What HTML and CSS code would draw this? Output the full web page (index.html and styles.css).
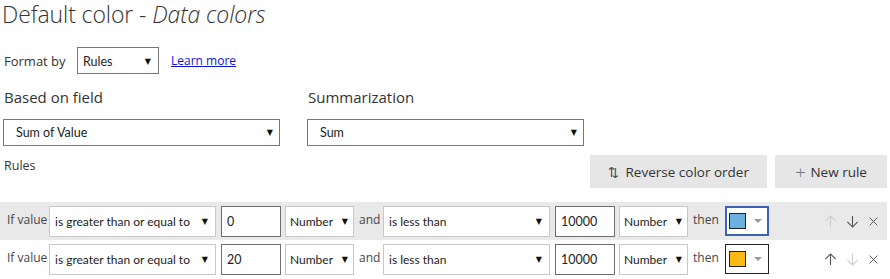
FILE: index.html
```html
<!DOCTYPE html>
<html lang="en">
<head>
  <meta charset="UTF-8">
  <title>Default color - Data colors</title>
  <link rel="stylesheet" href="styles.css">
</head>
<body>
  <h1 class="title">Default color - <em>Data colors</em></h1>

  <div class="format-row">
    <span class="format-label">Format by</span>
    <div class="select select-small"><span class="val">Rules</span><span class="caret">&#9660;</span></div>
    <a class="learn" href="#">Learn more</a>
  </div>

  <div class="fields">
    <div class="field">
      <div class="field-label">Based on field</div>
      <div class="select select-wide"><span class="val">Sum of Value</span><span class="caret">&#9660;</span></div>
    </div>
    <div class="field">
      <div class="field-label">Summarization</div>
      <div class="select select-wide"><span class="val">Sum</span><span class="caret">&#9660;</span></div>
    </div>
  </div>

  <div class="rules-head">
    <span class="rules-label">Rules</span>
    <div class="actions">
      <button class="btn btn-reverse"><span class="btn-icon">&#8645;</span> Reverse color order</button>
      <button class="btn btn-new"><span class="btn-plus">+</span> New rule</button>
    </div>
  </div>

  <div class="rule rule-active">
    <span class="word word-if">If value</span>
    <div class="ctl ctl-cond"><span class="val">is greater than or equal to</span><span class="caret">&#9660;</span></div>
    <div class="ctl-input">0</div>
    <div class="ctl ctl-type"><span class="val">Number</span><span class="caret">&#9660;</span></div>
    <span class="word word-and">and</span>
    <div class="ctl ctl-cond"><span class="val">is less than</span><span class="caret">&#9660;</span></div>
    <div class="ctl-input">10000</div>
    <div class="ctl ctl-type"><span class="val">Number</span><span class="caret">&#9660;</span></div>
    <span class="word word-then">then</span>
    <div class="picker picker-focus"><span class="swatch swatch-blue"></span><span class="picker-caret"></span></div>
    <div class="tools">
      <svg class="ico off" viewBox="0 0 14 14"><path d="M7 13V1M1.5 6.5L7 1l5.5 5.5"/></svg>
      <svg class="ico" viewBox="0 0 14 14"><path d="M7 1v12M1.5 7.5L7 13l5.5-5.5"/></svg>
      <svg class="ico ico-x" viewBox="0 0 14 14"><path d="M2 2l10 10M12 2L2 12"/></svg>
    </div>
  </div>

  <div class="rule">
    <span class="word word-if">If value</span>
    <div class="ctl ctl-cond"><span class="val">is greater than or equal to</span><span class="caret">&#9660;</span></div>
    <div class="ctl-input">20</div>
    <div class="ctl ctl-type"><span class="val">Number</span><span class="caret">&#9660;</span></div>
    <span class="word word-and">and</span>
    <div class="ctl ctl-cond"><span class="val">is less than</span><span class="caret">&#9660;</span></div>
    <div class="ctl-input">10000</div>
    <div class="ctl ctl-type"><span class="val">Number</span><span class="caret">&#9660;</span></div>
    <span class="word word-then">then</span>
    <div class="picker"><span class="swatch swatch-orange"></span><span class="picker-caret"></span></div>
    <div class="tools">
      <svg class="ico" viewBox="0 0 14 14"><path d="M7 13V1M1.5 6.5L7 1l5.5 5.5"/></svg>
      <svg class="ico off" viewBox="0 0 14 14"><path d="M7 1v12M1.5 7.5L7 13l5.5-5.5"/></svg>
      <svg class="ico ico-x" viewBox="0 0 14 14"><path d="M2 2l10 10M12 2L2 12"/></svg>
    </div>
  </div>
</body>
</html>
```

FILE: styles.css
```css
body { margin: 0; font-family: "Open Sans", "Noto Sans", sans-serif; color: #333; background: #fff; width: 890px; overflow: hidden; }

.title { margin: 0; padding: 0 0 0 2px; height: 30px; font-size: 23px; font-weight: 300; line-height: 28px; color: #333; letter-spacing: -0.1px; }
.title em { font-style: italic; }

.format-row { display: flex; align-items: center; height: 27px; margin-top: 17px; }
.format-label { font-size: 13px; margin-left: 4px; width: 73px; }
.learn { font-size: 12px; color: #1010e0; margin-left: 12px; }

.val { white-space: nowrap; overflow: hidden; }
.select { box-sizing: border-box; display: flex; align-items: center; justify-content: space-between; border: 1px solid #777; height: 27px; font-family: Lato, sans-serif; font-size: 12.5px; color: #222; background: #fff; }
.select-small { width: 82px; padding: 2px 7px 0 5px; }
.select-wide { width: 277px; padding: 0 6px 0 12px; }
.caret { font-family: "DejaVu Sans", sans-serif; font-size: 8px; color: #111; flex: none; margin-left: 4px; }

.fields { display: flex; gap: 27px; margin-top: 13px; padding-left: 3px; }
.field-label { font-size: 15px; height: 32px; padding-left: 1px; }

.rules-head { display: flex; justify-content: space-between; margin-top: 9px; height: 47px; }
.rules-label { font-size: 12.5px; margin-left: 4px; margin-top: 2px; }
.actions { display: flex; gap: 8px; margin-right: 3px; height: 33px; }
.btn { border: none; background: #e6e6e6; font-family: inherit; font-size: 13.5px; color: #333; height: 33px; padding: 0; }
.btn-reverse { width: 177px; }
.btn-new { width: 112px; }
.btn-icon { font-size: 13px; color: #444; margin-right: 3px; }
.btn-plus { font-size: 19px; font-weight: 300; color: #777; vertical-align: -2px; margin-right: 1px; }

.rule { display: flex; align-items: center; width: 887px; height: 38px; }
.rule-active { background: #e9e9e9; }

.word { font-size: 12px; color: #444; margin-top: -3px; }
.word-if { margin-left: 7px; width: 42px; }
.word-and { width: 24px; margin-left: 5px; }
.word-then { width: 32px; margin-left: 5px; }

.ctl { box-sizing: border-box; display: flex; align-items: center; justify-content: space-between; height: 31px; border: 1px solid #c8c8c8; background: #fff; font-family: Lato, sans-serif; font-size: 12px; color: #222; padding: 1px 7px 0 5px; }
.ctl-cond { width: 167px; margin-right: 5px; }
.ctl-type { width: 69px; padding-left: 4px; padding-right: 5px; }
.ctl-input { box-sizing: border-box; width: 60px; height: 31px; border: 1px solid #6e6e6e; background: #fff; font-family: Lato, sans-serif; font-size: 12.5px; color: #222; padding: 7px 0 0 5px; margin-right: 4px; }

.picker { box-sizing: border-box; display: flex; align-items: center; width: 44px; height: 30px; border: 1px solid #222; background: #fff; padding-left: 3px; }
.picker-focus { border: 2px solid #3b63b5; padding-left: 2px; }
.swatch { box-sizing: border-box; width: 17px; height: 16px; border: 1px solid #222; }
.swatch-blue { background: #6cafe1; }
.swatch-orange { background: #fdb813; }
.picker-caret { width: 0; height: 0; border-left: 4px solid transparent; border-right: 4px solid transparent; border-top: 4px solid #999; margin-left: 8px; }

.tools { display: flex; gap: 9px; margin-left: auto; margin-right: 8px; align-items: center; height: 31px; }
.ico { width: 13px; height: 13px; fill: none; stroke: #555; stroke-width: 1.2; }
.ico.off { stroke: #ccc; }
.ico-x { width: 11px; height: 11px; }
```
